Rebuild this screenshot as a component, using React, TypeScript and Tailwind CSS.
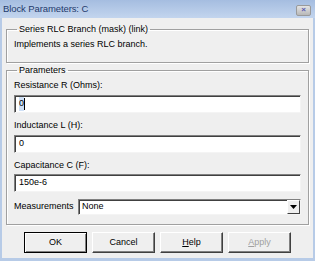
import { ReactNode } from 'react';

const font = { fontFamily: '"Liberation Sans", Arial, sans-serif' };

function Group({ title, children, className }: { title: string; children: ReactNode; className?: string }) {
  return (
    <fieldset
      className={`mx-[4px] border border-[#a0a0a0] shadow-[1px_1px_0_#fff,inset_1px_1px_0_#fff] px-[7px] ${className ?? ''}`}
    >
      <legend className="ml-[3px] px-[2px] text-[9px] leading-[13px] text-black">{title}</legend>
      {children}
    </fieldset>
  );
}

function Field({ value, caret }: { value: string; caret?: boolean }) {
  return (
    <div className="h-[18px] bg-white border border-t-[#808080] border-l-[#808080] border-b-[#f4f4f4] border-r-[#f4f4f4] shadow-[inset_1px_1px_0_#404040] flex items-center pl-[4px] text-[9px] text-black">
      <span className={caret ? 'bg-[#cfe0f6]' : ''}>{value}</span>
      {caret && <span className="w-px h-[12px] bg-black" />}
    </div>
  );
}

function Button({ children, disabled, primary }: { children: ReactNode; disabled?: boolean; primary?: boolean }) {
  return (
    <button
      className={`w-[63px] h-[21px] bg-[#efefef] border text-[9px] ${
        primary
          ? 'border-black shadow-[inset_1px_1px_0_#fff,inset_-1px_-1px_0_#808080]'
          : 'border-t-white border-l-white border-b-[#404040] border-r-[#404040] shadow-[inset_-1px_-1px_0_#808080]'
      } ${disabled ? 'text-[#a0a0a0]' : 'text-black'}`}
    >
      {children}
    </button>
  );
}

export default function App() {
  return (
    <div className="w-[315px] h-[261px] bg-[#b7cbe7] flex flex-col select-none" style={font}>
      <div className="h-[18px] shrink-0 flex items-center justify-between px-[3px] bg-gradient-to-b from-[#a5bde0] to-[#c3d5ee]">
        <span className="text-[9.5px] tracking-[-0.1px] text-[#1f3a6c]">Block Parameters: C</span>
        <div className="w-[15px] h-[11px] mt-[2px] mr-[1px] rounded-[2px] border border-[#9a9a9a] bg-gradient-to-b from-[#e4e4e4] to-[#b8b8b8] flex items-center justify-center">
          <span className="text-[8px] leading-none text-[#5a5ab0] font-bold">×</span>
        </div>
      </div>
      <div className="flex-1 mx-[2px] mb-[3px] bg-[#efefef] flex flex-col pt-[5px]">
        <Group title="Series RLC Branch (mask) (link)" className="pb-[11px]">
          <div className="text-[9px] leading-[13px] pt-[2px] text-black">Implements a series RLC branch.</div>
        </Group>
        <Group title="Parameters" className="mt-[1px] pb-[9px]">
          <div className="text-[9px] leading-[13px] mt-[2px]">Resistance R (Ohms):</div>
          <div className="mt-[3px]"><Field value="0" caret /></div>
          <div className="text-[9px] leading-[13px] mt-[6px]">Inductance L (H):</div>
          <div className="mt-[3px]"><Field value="0" /></div>
          <div className="text-[9px] leading-[13px] mt-[6px]">Capacitance C (F):</div>
          <div className="mt-[2px]"><Field value="150e-6" /></div>
          <div className="mt-[7px] flex items-center">
            <span className="text-[9px] w-[64px] whitespace-nowrap">Measurements</span>
            <div className="flex-1 h-[16px] bg-white border border-t-[#808080] border-l-[#808080] border-b-[#f4f4f4] border-r-[#f4f4f4] shadow-[inset_1px_1px_0_#404040] flex items-center">
              <span className="flex-1 pl-[3px] text-[9px]">None</span>
              <div className="w-[13px] h-[14px] bg-[#efefef] border border-t-white border-l-white border-b-[#404040] border-r-[#404040] flex items-center justify-center">
                <svg width="7" height="4" viewBox="0 0 7 4"><path d="M0 0h7L3.5 4z" fill="#000" /></svg>
              </div>
            </div>
          </div>
        </Group>
        <div className="mt-[7px] flex justify-center gap-[5px]">
          <Button primary>OK</Button>
          <Button>Cancel</Button>
          <Button><span className="underline">H</span>elp</Button>
          <Button disabled><span className="underline">A</span>pply</Button>
        </div>
      </div>
    </div>
  );
}
